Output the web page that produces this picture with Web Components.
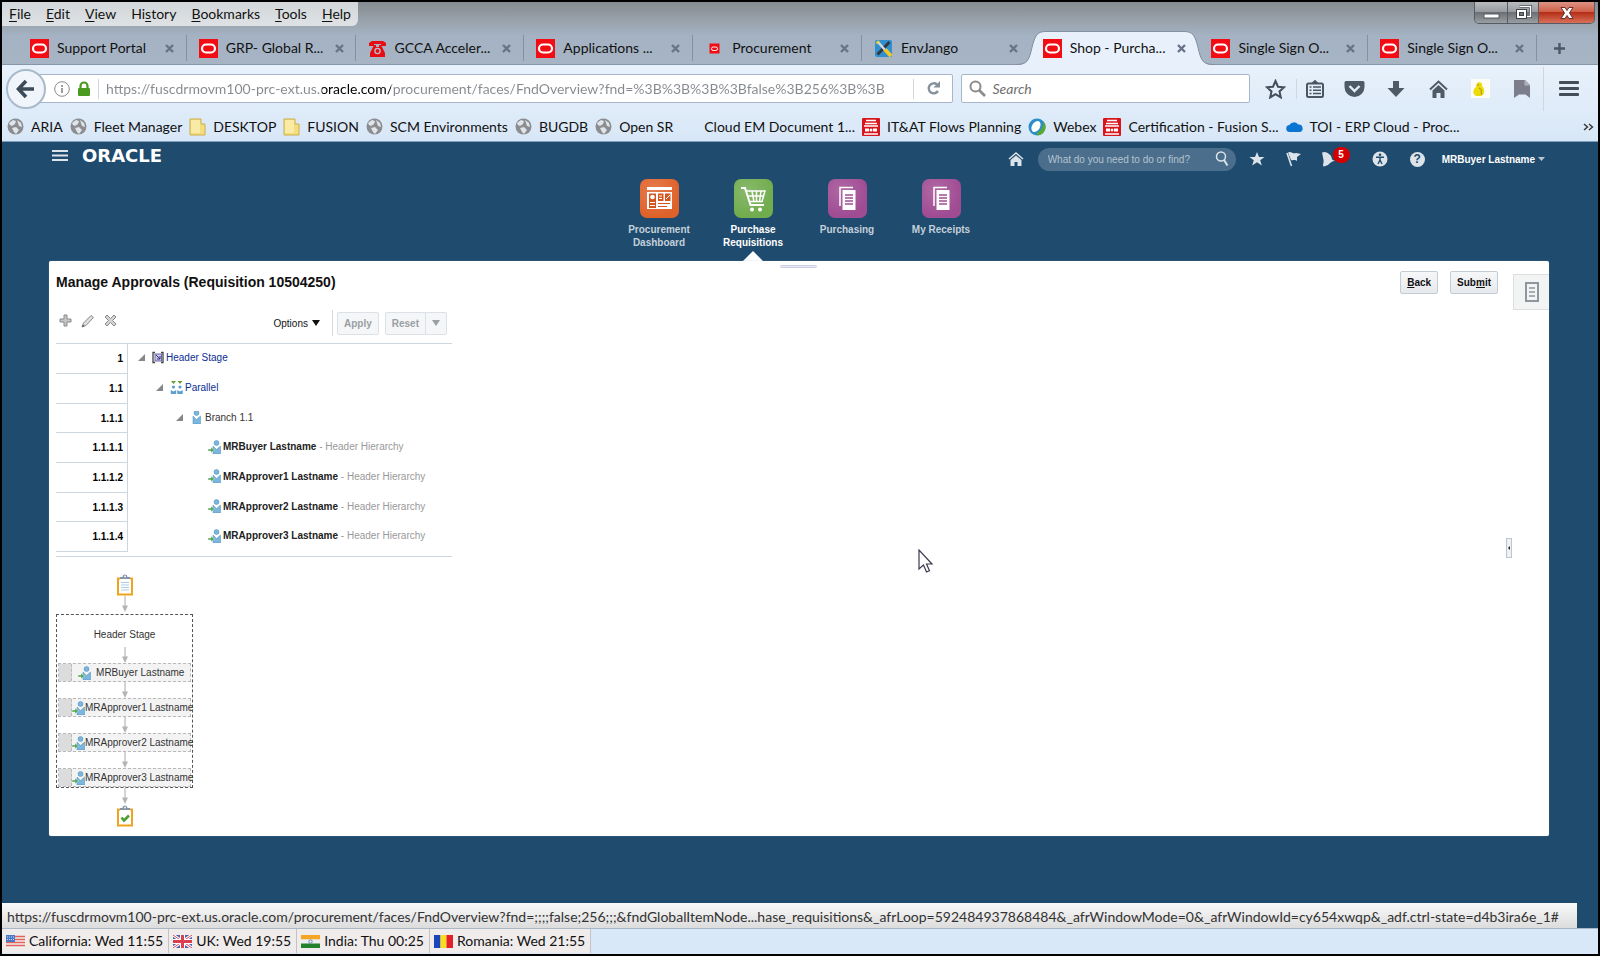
<!DOCTYPE html>
<html lang="en">
<head>
<meta charset="utf-8">
<title>Shop - Purchase Requisitions</title>
<style>
    html, body {
        margin: 0;
        height: 100%;
    }
    body {
        box-sizing: border-box;
        min-height: 100vh;
        border: 2px solid #000;
        background: #1f4b6e;
        display: flex;
        flex-direction: column;
        font: 14px/20px Lato, "Open Sans", sans-serif;
        color: #111;
    }
    approvals-app {
        flex: 1;
    }
</style>
</head>
<body>
<browser-head></browser-head>
<approvals-app></approvals-app>
<status-bar></status-bar>

<script>
const makeTemplate = (html) => {
    const template = document.createElement('template');
    template.innerHTML = html;
    return template;
};

const render = (host, template) => {
    host.attachShadow({ mode: 'open' }).appendChild(template.content.cloneNode(true));
};

const person = `<circle cx="8.500" cy="3" r="2.500" fill="#7ab6dd" stroke="#4d8ebd" stroke-width=".5"/>
    <path d="M5 6l3.500 3.500L12.500 6v8H5z" fill="#7ab6dd" stroke="#4d8ebd" stroke-width=".5"/>`;
const sheets = `<path d="M12 27V8.500h13" fill="none" stroke="#fff" stroke-width="1.500"/>
    <path d="M14.500 11h13v20h-13z" fill="#fff"/><path d="M17 16h8M17 19h8M17 22h8M17 25h8" stroke="#a04c93" stroke-width="1.300"/>`;
const board = `<path d="M2 4.500v16h14v-16" fill="#fff" stroke="#f0a31c" stroke-width="2"/><path d="M1 4.500h3M14 4.500h3" stroke="#f0a31c" stroke-width="2"/>
    <path d="M4 5V3h2.500a2.500 2.500 0 0 1 5 0H14v2z" fill="#8494a8"/><circle cx="9" cy="2.500" r=".9" fill="#fff"/>`;
const archive = `<rect width="18" height="18" rx="1" fill="#d8141c"/><path d="M4 2.500h10M3 5.500h12" stroke="#fff" stroke-width="1.500"/>
    <path d="M2 8h14M2 16h14" stroke="#fff" stroke-width="1.300"/><path d="M3 12h4M11 12h4" stroke="#fff" stroke-width="3"/><circle cx="9" cy="12" r="1.500" fill="#fff"/>`;

// name: [width, height, markup]
const icons = {
    oracle: [19, 19, '<path d="M0 0h19v19H0z" fill="#f20d14"/><rect x="3" y="5.500" width="13" height="8" rx="4" fill="none" stroke="#fff" stroke-width="2.200"/>'],
    oracleSmall: [19, 19, '<path d="M4.500 4.500h10v10h-10z" fill="#f20d14"/><rect x="6.500" y="8" width="6" height="3.500" rx="1.700" fill="none" stroke="#fff"/>'],
    phone: [19, 19, '<path d="M1 7V4l3-2h11l3 2v3h-5V5H6v2z" fill="#e80d12"/><path d="M6 6h2v2h3V6h2l4 8v4H2v-4z" fill="#e80d12"/><circle cx="9.500" cy="12" r="2.600" fill="none" stroke="#b7c0cc" stroke-width="1.300"/>'],
    tools: [19, 19, '<rect x="1" y="1" width="17" height="17" rx="2" fill="#2f8fd0"/><path d="M15.500 3L3.500 15.500" stroke="#33383d" stroke-width="3"/><path d="M4 3l7 8" stroke="#d5d8da" stroke-width="2.400"/><path d="M2.500 4.500L5 2" stroke="#f2cb37" stroke-width="2.400"/><path d="M11 10.500l6 6.500" stroke="#f4c722" stroke-width="4"/>'],
    close: [9, 9, '<path d="M1 1l7 7M8 1L1 8" stroke="#667486" stroke-width="2.400"/>'],
    plus: [13, 13, '<path d="M6.500 1v11M1 6.500h11" stroke="#4d5866" stroke-width="2.400"/>'],
    minimize: [17, 14, '<rect x="1" y="8" width="15" height="4" fill="#fff" stroke="#565a60"/>'],
    restore: [18, 16, '<path d="M5.500 1.500h11v10h-4" fill="none" stroke="#3f4348" stroke-width="3"/><path d="M5.500 1.500h11v10h-4" fill="none" stroke="#fff" stroke-width="1.500"/><rect x="2.500" y="4.500" width="10" height="9" fill="#fff" stroke="#3f4348"/><rect x="5.500" y="7.500" width="4" height="3" fill="#777" stroke="#3f4348"/>'],
    windowClose: [16, 14, '<path d="M2 1.500h4l2 3 2-3h4L10.500 7l3.500 5.500h-4L8 9.500l-2 3H2L5.500 7z" fill="#fff" stroke="#63332f"/>'],
    back: [20, 20, '<path d="M10 2L2.500 10 10 18M3 10h15" fill="none" stroke="#3d4a58" stroke-width="3.600"/>'],
    info: [16, 16, '<circle cx="8" cy="8" r="7.300" fill="none" stroke="#8a8a8a"/><path d="M8 7v5M8 4v2" stroke="#888" stroke-width="1.600"/>'],
    lock: [14, 16, '<path d="M3.500 8V5a3.500 3.500 0 0 1 7 0v3" fill="none" stroke="#4a9a1f" stroke-width="2.200"/><rect x="1" y="7" width="12" height="8" rx="1" fill="#4a9a1f"/>'],
    reload: [15, 15, '<path d="M12 10A5 5 0 1 1 11 3.500" fill="none" stroke="#84909c" stroke-width="2.400"/><path d="M14 0v6.500H7.500z" fill="#84909c"/>'],
    find: [17, 17, '<circle cx="6.500" cy="6.500" r="5" fill="none" stroke="#8b8b8b" stroke-width="2"/><path d="M10 10l6 6" stroke="#8b8b8b" stroke-width="2.600"/>'],
    star: [21, 20, '<path d="M10.500 2l2.500 5.700 6 .6-4.500 4.100 1.300 6-5.300-3.200-5.300 3.200 1.300-6L2 8.300l6-.6z" fill="none" stroke="#444f5b" stroke-width="2"/>'],
    list: [18, 19, '<rect x="1" y="4.500" width="16" height="13.500" rx="1.500" fill="none" stroke="#4b5663" stroke-width="2"/><path d="M5.500 4L9 .8 12.500 4z" fill="#4b5663"/><path d="M3.500 8h2M7 8h8M3.500 11.300h2M7 11.300h8M3.500 14.600h2M7 14.600h8" stroke="#4b5663" stroke-width="1.500"/>'],
    pocket: [21, 18, '<path d="M2 1h17a1.500 1.500 0 0 1 1.500 1.500V7a10 10 0 0 1-20 0V2.500A1.500 1.500 0 0 1 2 1z" fill="#4f5a67"/><path d="M5.500 6l5 5 5-5" fill="none" stroke="#e5effa" stroke-width="2.400"/>'],
    download: [18, 18, '<path d="M6 1h6v7h5.500L9 17 .5 8H6z" fill="#4f5a67"/>'],
    house: [19, 18, '<path d="M1 9.500l8.500-8 8.500 8" fill="none" stroke="#4f5a67" stroke-width="2"/><path d="M3.500 10.500l6-5.500 6 5.500V18h-4v-5h-4v5h-4z" fill="#4f5a67"/>'],
    duck: [19, 19, '<path d="M0 0h19v19H0z" fill="#fdfdf5"/><path d="M6 4c3-2 6 0 5 3 3 2 3 9-1 10H5c-4-2-3-7 0-9z" fill="#ecdc0b"/><path d="M8 9c4 1 1 5 3 7M6 6h2" stroke="#a38a13" fill="none"/>'],
    flagPage: [18, 20, '<path d="M1 1h11l5 5v13l-4.500-3.500H6L1 19z" fill="#7c7f8b"/><path d="M11.500 1v5.500H17" fill="#b0b3bd"/>'],
    menu: [20, 17, '<path d="M1 2.500h18M1 8.500h18M1 14.500h18" stroke="#434d58" stroke-width="2.800" stroke-linecap="round"/>'],
    globe: [17, 17, '<circle cx="8.500" cy="8.500" r="8" fill="#8b8d90"/><path d="M2 5l4-3 3 1-1 3-3 2-2-1zM10 2l4 3 1 4-3-1-1-3zM5 10l4-1 3 3-3 4-2-2z" fill="#dfe5ea"/>'],
    folder: [17, 18, '<path d="M1 1h11v5h4v11H1z" fill="#f3dd7c" stroke="#cdae4b"/><path d="M2 2h9v13H2z" fill="#f9eba5"/>'],
    blank: [17, 17, ''],
    archive: [18, 18, archive],
    webex: [18, 18, '<circle cx="9" cy="9" r="8.500" fill="#2b8ec9"/><path d="M10 17.500A8.500 8.500 0 0 0 15 3c1 5-1 9-7 13z" fill="#58a832"/><ellipse cx="8" cy="8.500" rx="4" ry="6" fill="#fff" transform="rotate(30 8 8.500)"/>'],
    cloud: [17, 12, '<path d="M4 11a3.500 3.500 0 0 1-.5-7A5 5 0 0 1 12 3.500 3.800 3.800 0 0 1 13.500 11z" fill="#0b75d1"/>'],
    more: [11, 8, '<path d="M1 1l3.500 3L1 7M6 1l3.500 3L6 7" fill="none" stroke="#333" stroke-width="1.400"/>'],

    burger: [16, 13, '<path d="M0 2h16M0 6.500h16M0 11h16" stroke="#dde4ea" stroke-width="2"/>'],
    appHome: [16, 16, '<path d="M1 8l7-6 7 6" fill="none" stroke="#dce3e9" stroke-width="1.500"/><path d="M2.500 9L8 4.500 13.500 9v6h-4v-4h-3v4h-4z" fill="#dce3e9"/>'],
    appFind: [14, 16, '<circle cx="6" cy="5.500" r="4.500" fill="none" stroke="#dce3e9" stroke-width="1.500"/><path d="M9 9l3.500 5.500" stroke="#dce3e9" stroke-width="2"/>'],
    appStar: [16, 16, '<path d="M8 1l2 5h5.500l-4.300 3.300 1.600 5.200L8 11.300l-4.800 3.200 1.600-5.200L.5 6H6z" fill="#dce3e9"/>'],
    appFlag: [16, 16, '<path d="M1 2l4.500 13" stroke="#dce3e9" stroke-width="1.600"/><path d="M2 1.500c3-2 5 2 8 .5l5 1-4 3v4C9 8 7 10 5 9z" fill="#dce3e9"/>'],
    bell: [16, 16, '<path d="M1 1.500l3-.5c4 1 7 4 7 7.500L14 10c-3 0-5 2-7 4l-4 1.500C1 15 3 12 2.500 9z" fill="#dce3e9"/>'],
    access: [16, 16, '<circle cx="8" cy="8" r="7.500" fill="#dce3e9"/><circle cx="8" cy="3.800" r="1.300" fill="#1f4b6e"/><path d="M4 6.300h8M8 6v4M8 9l-2 4M8 9l2 4" stroke="#1f4b6e" stroke-width="1.400"/>'],
    dash: [39, 39, '<path d="M7 8h25v3H7z" fill="#fff"/><path d="M7 13h25v17H7z" fill="#fff"/><path d="M9 14.500h7V29H9zM18 14.500h5.500V22H18zM25 14.500h5.500V22H25z" fill="#d5551f"/><circle cx="12.500" cy="18" r="2.300" fill="#fff"/><path d="M10 23.500h5M10 26.500h5M19 17h3M19 19.500h3M26 20l2-2 2-2" stroke="#fff"/><path d="M18 24.500h12M18 27.500h9" stroke="#d5551f"/>'],
    cart: [39, 39, '<path d="M7 9h4l5.500 17H30" fill="none" stroke="#fff" stroke-width="2"/><path d="M12 12h19l-3 10.500H15M13.500 17h16M18 12l2 11M22.500 12v11M27 12l-1.500 11" fill="none" stroke="#fff" stroke-width="1.500"/><circle cx="18" cy="30.500" r="2" fill="#fff"/><circle cx="26" cy="30.500" r="2" fill="#fff"/>'],
    sheets: [39, 39, sheets],
    notes: [14, 20, '<rect x="1" y="1" width="12" height="18" fill="#f2f3f3" stroke="#8f979e" stroke-width="2"/><path d="M4 6h6M4 10h6M4 14h6" stroke="#8f979e" stroke-width="1.500"/>'],
    add: [13, 13, '<path d="M5 1h3v4h4v3H8v4H5V8H1V5h4z" fill="#c5c5c5" stroke="#8a8a8a"/>'],
    pencil: [14, 14, '<path d="M1 13l1.500-4L10 1.500 12.500 3.500 5 11.500z" fill="#dedede" stroke="#8a8a8a"/><path d="M1 13l1-2.500 1.500 1.500z" fill="#555"/>'],
    remove: [13, 13, '<path d="M3 1l3.500 3.500L10 1l2 2-3.500 3.500L12 10l-2 2-3.500-3.500L3 12l-2-2 3.500-3.500L1 3z" fill="#d3d3d3" stroke="#8a8a8a"/>'],
    open: [7, 7, '<path d="M7 0v7H0z" fill="#84888b"/>'],
    caret: [8, 6, '<path d="M0 0h8L4 6z" fill="currentColor"/>'],
    smallCaret: [7, 5, '<path d="M0 0h7L3.500 4z" fill="currentColor"/>'],
    stage: [12, 13, '<path d="M3 1.500H1v10h2M9 1.500h2v10H9" fill="none" stroke="#444" stroke-width="1.300"/><rect x="3" y="3" width="6.500" height="7" fill="#c9c8ee" stroke="#6a68a8"/><path d="M4 4l4 4M8 5v3H5" stroke="#38366b" fill="none"/>'],
    parallel: [13, 13, '<path d="M1 0h5L3.500 3zM7.500 0h5L10 3z" fill="#63a032"/><circle cx="3.500" cy="6" r="1.600" fill="#5d9fce"/><circle cx="10" cy="6" r="1.600" fill="#5d9fce"/><path d="M.8 9l2.700 1.500L6.200 9v4H.8zM7.300 9l2.700 1.500L12.700 9v4H7.300z" fill="#5d9fce"/>'],
    branch: [9, 13, `<g transform="translate(-4 -1)">${person}</g>`],
    approver: [13, 14, `${person}<path d="M0 9h3V7l3.500 3L3 13v-2H0z" fill="#57a75c" stroke="#fff" stroke-width=".4"/>`],
    boardStart: [18, 22, `${board}<path d="M5 8.500h8M5 11h8M5 13.500h8M5 16h8" stroke="#a9cbe8" stroke-width="1.200"/>`],
    boardEnd: [18, 22, `${board}<path d="M5.500 12.500l2.500 3 5-5" fill="none" stroke="#4f9f35" stroke-width="2.600"/>`],
    arrowDown: [8, 16, '<path d="M4 0v10" stroke="#d4d4d4" stroke-width="2"/><path d="M1 9.500h6L4 16z" fill="#b4b4b4"/>'],
    pointer: [16, 25, '<path d="M1 1v19l4.500-4 3 7 3-1.300L8.500 15H14z" fill="#fff" stroke="#3a3a50" stroke-width="1.200"/>'],

    us: [19, 13, '<path d="M0 0h19v13H0z" fill="#f3eeee"/><path d="M0 1.500h19M0 4.500h19M0 7.500h19M0 10.500h19" stroke="#e0645c" stroke-width="1.500"/><path d="M0 0h9v7H0z" fill="#4a78c4"/><path d="M1 2h7M1 4.500h7" stroke="#c9d8f2" stroke-dasharray="1 1"/>'],
    uk: [19, 13, '<path d="M0 0h19v13H0z" fill="#5262a8"/><path d="M0 0l19 13M19 0L0 13" stroke="#fff" stroke-width="3"/><path d="M0 0l19 13M19 0L0 13" stroke="#d9475a"/><path d="M9.500 0v13M0 6.500h19" stroke="#fff" stroke-width="5"/><path d="M9.500 0v13M0 6.500h19" stroke="#dc4050" stroke-width="3"/>'],
    india: [19, 13, '<path d="M0 0h19v4.500H0z" fill="#f5a526"/><path d="M0 4.500h19v4H0z" fill="#eee"/><path d="M0 8.500h19V13H0z" fill="#23812c"/><circle cx="9.500" cy="6.500" r="1.700" fill="none" stroke="#6a86ba"/>'],
    romania: [19, 13, '<path d="M0 0h6.500v13H0z" fill="#1c45bd"/><path d="M6.500 0h6v13h-6z" fill="#f9dd1a"/><path d="M12.500 0H19v13h-6.500z" fill="#e3202a"/>']
};

class UiIcon extends HTMLElement {
    constructor() {
        super();
        const [width, height, markup] = icons[this.getAttribute('name')];
        render(this, makeTemplate(`
        <style>
        :host { display: inline-flex; flex: none; }
        svg { display: block; }
        </style>
        <svg width="${width}" height="${height}" viewBox="0 0 ${width} ${height}" aria-hidden="true">${markup}</svg>`));
    }
}

class BrowserTab extends HTMLElement {
    constructor() {
        super();
        render(this, makeTemplate(`
        <style>
        :host {
            flex: 1;
            min-width: 0;
            height: 34px;
            position: relative;
            display: flex;
            align-items: center;
            gap: 8px;
            padding: 0 9px 0 12px;
            box-sizing: border-box;
        }
        .label {
            flex: 1;
            white-space: nowrap;
        }
        button {
            display: flex;
            padding: 4px;
            border: 0;
            background: none;
        }
        .line {
            position: absolute;
            right: 0;
            width: 1px;
            height: 26px;
            background: #83909f;
        }
        :host([before]) .line, .shape { display: none; }
        :host([active]) .line { display: none; }
        :host([active]) .shape {
            display: flex;
            position: absolute;
            inset: 0 -15px;
        }
        .fill {
            flex: 1;
            background: #e8f1fb;
            border-top: 1px solid #8191a2;
        }
        .front { position: relative; }
        ui-icon { position: relative; }
        </style>
        <div class="shape">
            <svg width="30" height="34" viewBox="0 0 30 34"><path d="M0 34c12 0 13-5 16-17S21 .5 30 .5V34z" fill="#e8f1fb"/><path d="M0 33.500c12 0 13-5 16-17S21 .5 30 .5" fill="none" stroke="#8191a2"/></svg>
            <div class="fill"></div>
            <svg width="30" height="34" viewBox="0 0 30 34"><path d="M30 34c-12 0-13-5-16-17S9 .5 0 .5V34z" fill="#e8f1fb"/><path d="M30 33.500c-12 0-13-5-16-17S9 .5 0 .5" fill="none" stroke="#8191a2"/></svg>
        </div>
        <ui-icon name="${this.getAttribute('icon')}"></ui-icon>
        <span class="label front"><slot></slot></span>
        <button class="front" aria-label="Close tab"><ui-icon name="close"></ui-icon></button>
        <span class="line"></span>`));
    }
}

class BookmarkItem extends HTMLElement {
    constructor() {
        super();
        render(this, makeTemplate(`
        <style>
        :host { display: block; white-space: nowrap; }
        a {
            display: flex;
            align-items: center;
            gap: 7px;
            color: inherit;
            text-decoration: none;
        }
        </style>
        <a href="#"><ui-icon name="${this.getAttribute('icon')}"></ui-icon><span><slot></slot></span></a>`));
    }
}

const headTemplate = makeTemplate(`
    <style>
    :host { display: block; }
    button {
        display: flex;
        align-items: center;
        justify-content: center;
        padding: 0;
        border: 0;
        background: none;
        font: inherit;
        color: inherit;
    }
    u { text-underline-offset: 2px; }
    .frame {
        background: linear-gradient(#858b90, #9aa4ae 20px, #a4b2c3 34px, #a6b4c4);
        border-bottom: 1px solid #8796a7;
    }
    .title-row {
        display: flex;
        justify-content: space-between;
        align-items: flex-start;
        height: 29px;
    }
    .menus {
        display: flex;
        gap: 15px;
        height: 24px;
        padding: 0 7px;
        border-radius: 0 0 6px 0;
        background: linear-gradient(#d3d6d9, #dfe2e4);
    }
    .window {
        display: flex;
        margin-right: 3px;
        height: 22px;
        border: 1px solid #555c64;
        border-top: 0;
        border-radius: 0 0 5px 5px;
        box-sizing: border-box;
        overflow: hidden;
    }
    .window button {
        width: 33px;
        background: linear-gradient(#b9bcbf, #9a9da1 45%, #6c7075 50%, #9a9fa4);
        border-right: 1px solid #555c64;
    }
    .window .restore { width: 31px; }
    .window .exit {
        width: 55px;
        border-right: 0;
        background: linear-gradient(#dd9384, #d1624c 45%, #b52e16 50%, #d9705a);
    }
    .tabs {
        display: flex;
        align-items: center;
        margin-bottom: -1px;
        padding: 0 16px;
    }
    .new-tab { width: 45px; height: 30px; }
    .bars { background: linear-gradient(#e8f1fb, #d8e7f7); border-bottom: 1px solid #7ea0bd; }
    .nav {
        display: flex;
        align-items: center;
        height: 47px;
        padding: 0 4px;
    }
    .back {
        width: 40px;
        height: 40px;
        flex: none;
        box-sizing: border-box;
        border: 2px solid #a9bacb;
        border-radius: 50%;
        background: #eff5fb;
        position: relative;
    }
    .url, .search {
        display: flex;
        align-items: center;
        height: 29px;
        box-sizing: border-box;
        border: 1px solid #a6b7ca;
        background: #fff;
    }
    .url {
        flex: 929;
        margin-left: -20px;
        padding-left: 27px;
        gap: 7px;
        border-radius: 0 2px 2px 0;
    }
    .search {
        flex: 289;
        margin-left: 8px;
        padding-left: 7px;
        gap: 6px;
        border-radius: 2px;
    }
    input {
        flex: 1;
        min-width: 0;
        padding: 0;
        border: 0;
        outline: 0;
        background: none;
        font: inherit;
        color: #7b7f84;
    }
    .url input {
        background: linear-gradient(90deg, #85898e 216px, #000 216px, #000 285px, #85898e 285px);
        -webkit-background-clip: text;
        background-clip: text;
        -webkit-text-fill-color: transparent;
    }
    .search input::placeholder { font-style: italic; color: #6f6f6f; opacity: 1; }
    .rule { width: 1px; height: 20px; background: #cfd6de; flex: none; }
    .reload { width: 38px; margin-left: -7px; }
    .actions { display: flex; align-items: center; }
    .actions button { width: 42px; }
    .actions .star { margin-left: 4px; }
    .actions .list { width: 36px; }
    .actions .rule { height: 44px; }
    .actions .short { height: 20px; }
    .actions .menu { width: 50px; }
    .marks {
        display: flex;
        align-items: center;
        gap: 7px;
        height: 29px;
        padding: 0 4px 0 5px;
    }
    .more { margin-left: auto; }
    </style>
    <div class="frame">
        <div class="title-row">
            <div class="menus">
                <button><span><u>F</u>ile</span></button>
                <button><span><u>E</u>dit</span></button>
                <button><span><u>V</u>iew</span></button>
                <button><span>Hi<u>s</u>tory</span></button>
                <button><span><u>B</u>ookmarks</span></button>
                <button><span><u>T</u>ools</span></button>
                <button><span><u>H</u>elp</span></button>
            </div>
            <div class="window">
                <button aria-label="Minimize"><ui-icon name="minimize"></ui-icon></button>
                <button class="restore" aria-label="Restore"><ui-icon name="restore"></ui-icon></button>
                <button class="exit" aria-label="Close"><ui-icon name="windowClose"></ui-icon></button>
            </div>
        </div>
        <div class="tabs">
            <browser-tab icon="oracle">Support Portal</browser-tab>
            <browser-tab icon="oracle">GRP- Global R...</browser-tab>
            <browser-tab icon="phone">GCCA Acceler...</browser-tab>
            <browser-tab icon="oracle">Applications ...</browser-tab>
            <browser-tab icon="oracleSmall">Procurement</browser-tab>
            <browser-tab icon="tools" before>EnvJango</browser-tab>
            <browser-tab icon="oracle" active>Shop - Purcha...</browser-tab>
            <browser-tab icon="oracle">Single Sign O...</browser-tab>
            <browser-tab icon="oracle">Single Sign O...</browser-tab>
            <button class="new-tab" aria-label="New tab"><ui-icon name="plus"></ui-icon></button>
        </div>
    </div>
    <div class="bars">
        <div class="nav">
            <button class="back" aria-label="Back"><ui-icon name="back"></ui-icon></button>
            <div class="url">
                <ui-icon name="info"></ui-icon>
                <ui-icon name="lock"></ui-icon>
                <span class="rule"></span>
                <input aria-label="Address" value="https://fuscdrmovm100-prc-ext.us.oracle.com/procurement/faces/FndOverview?fnd=%3B%3B%3B%3Bfalse%3B256%3B%3B">
                <span class="rule"></span>
                <button class="reload" aria-label="Reload"><ui-icon name="reload"></ui-icon></button>
            </div>
            <div class="search">
                <ui-icon name="find"></ui-icon>
                <input aria-label="Search" placeholder="Search">
            </div>
            <div class="actions">
                <button class="star" aria-label="Bookmark this page"><ui-icon name="star"></ui-icon></button>
                <span class="rule short"></span>
                <button class="list" aria-label="Show bookmarks"><ui-icon name="list"></ui-icon></button>
                <button aria-label="Save to Pocket"><ui-icon name="pocket"></ui-icon></button>
                <button aria-label="Downloads"><ui-icon name="download"></ui-icon></button>
                <button aria-label="Home"><ui-icon name="house"></ui-icon></button>
                <button aria-label="World clock"><ui-icon name="duck"></ui-icon></button>
                <button aria-label="Page flag"><ui-icon name="flagPage"></ui-icon></button>
                <span class="rule"></span>
                <button class="menu" aria-label="Open menu"><ui-icon name="menu"></ui-icon></button>
            </div>
        </div>
        <div class="marks">
            <bookmark-item icon="globe">ARIA</bookmark-item>
            <bookmark-item icon="globe">Fleet Manager</bookmark-item>
            <bookmark-item icon="folder">DESKTOP</bookmark-item>
            <bookmark-item icon="folder">FUSION</bookmark-item>
            <bookmark-item icon="globe">SCM Environments</bookmark-item>
            <bookmark-item icon="globe">BUGDB</bookmark-item>
            <bookmark-item icon="globe">Open SR</bookmark-item>
            <bookmark-item icon="blank">Cloud EM Document 1...</bookmark-item>
            <bookmark-item icon="archive">IT&amp;AT Flows Planning</bookmark-item>
            <bookmark-item icon="webex">Webex</bookmark-item>
            <bookmark-item icon="archive">Certification - Fusion S...</bookmark-item>
            <bookmark-item icon="cloud">TOI - ERP Cloud - Proc...</bookmark-item>
            <button class="more" aria-label="More bookmarks"><ui-icon name="more"></ui-icon></button>
        </div>
    </div>`);

class BrowserHead extends HTMLElement {
    constructor() {
        super();
        render(this, headTemplate);
    }
}

class NavTile extends HTMLElement {
    constructor() {
        super();
        render(this, makeTemplate(`
        <style>
        :host { display: block; width: 94px; position: relative; }
        a {
            display: flex;
            flex-direction: column;
            align-items: center;
            gap: 5px;
            text-align: center;
            text-decoration: none;
            font-weight: bold;
            color: #c3d0da;
        }
        :host([active]) a { color: #fff; }
        .tile {
            border-radius: 7px;
            background: radial-gradient(circle at 35% 30%, rgba(255, 255, 255, .16), transparent 70%) ${this.getAttribute('color')};
        }
        .label { width: 74px; }
        .notch { display: none; }
        :host([active]) .notch {
            display: block;
            position: absolute;
            bottom: 0;
            left: 37px;
            border: 10px solid transparent;
            border-top: 0;
            border-bottom-color: #fff;
        }
        </style>
        <a href="#">
            <ui-icon class="tile" name="${this.getAttribute('icon')}"></ui-icon>
            <span class="label"><slot></slot></span>
        </a>
        <span class="notch"></span>`));
    }
}

class AppHeader extends HTMLElement {
    constructor() {
        super();
        render(this, makeTemplate(`
        <style>
        :host {
            display: flex;
            align-items: center;
            height: 34px;
            padding: 0 53px 0 50px;
            color: #e4eaef;
        }
        button {
            display: flex;
            align-items: center;
            justify-content: center;
            gap: 3px;
            padding: 0;
            border: 0;
            background: none;
            font: inherit;
            color: inherit;
        }
        .left {
            display: flex;
            align-items: center;
            gap: 14px;
            flex: 1;
            padding-bottom: 7px;
        }
        .logo {
            font: 18px/20px "DejaVu Sans", sans-serif;
            font-weight: bold;
            color: #fff;
        }
        .search {
            display: flex;
            align-items: center;
            width: 198px;
            height: 23px;
            box-sizing: border-box;
            margin: 0 3px 0 14px;
            padding: 0 7px 0 10px;
            border-radius: 12px;
            background: #4a6e8b;
        }
        input {
            flex: 1;
            min-width: 0;
            padding: 0;
            border: 0;
            background: none;
            font: inherit;
        }
        input::placeholder { color: #b5c3cf; opacity: 1; }
        .tools { display: flex; }
        .tools button { width: 37px; }
        .tools .bell { width: 41px; position: relative; padding-right: 8px; box-sizing: border-box; }
        .tools .access { width: 45px; padding-left: 8px; box-sizing: border-box; }
        .badge {
            position: absolute;
            left: 20px;
            top: -4px;
            width: 17px;
            height: 16px;
            border-radius: 8px;
            background: #d40000;
            color: #fff;
            font-weight: bold;
            line-height: 16px;
        }
        .help span {
            width: 15px;
            height: 15px;
            border-radius: 50%;
            background: #dce3e9;
            color: #1f4b6e;
            font-size: 12px;
            font-weight: bold;
            line-height: 15px;
        }
        .user { font-weight: bold; color: #fff; margin-left: 6px; }
        .user ui-icon { color: #b7c5d1; }
        </style>
        <div class="left">
            <button aria-label="Navigator"><ui-icon name="burger"></ui-icon></button>
            <span class="logo">ORACLE</span>
        </div>
        <button aria-label="Home"><ui-icon name="appHome"></ui-icon></button>
        <div class="search">
            <input aria-label="Find" placeholder="What do you need to do or find?">
            <button aria-label="Go"><ui-icon name="appFind"></ui-icon></button>
        </div>
        <div class="tools">
            <button class="star" aria-label="Favorites"><ui-icon name="appStar"></ui-icon></button>
            <button aria-label="Watchlist"><ui-icon name="appFlag"></ui-icon></button>
            <button class="bell" aria-label="Notifications"><ui-icon name="bell"></ui-icon><span class="badge">5</span></button>
            <button class="access" aria-label="Accessibility"><ui-icon name="access"></ui-icon></button>
            <button class="help"><span>?</span></button>
        </div>
        <button class="user">MRBuyer Lastname <ui-icon name="smallCaret"></ui-icon></button>`));
    }
}

const stages = [
    { id: '1', depth: 0, icon: 'stage', name: 'Header Stage', link: true },
    { id: '1.1', depth: 1, icon: 'parallel', name: 'Parallel', link: true },
    { id: '1.1.1', depth: 2, icon: 'branch', name: 'Branch 1.1' },
    { id: '1.1.1.1', depth: 3, icon: 'approver', name: 'MRBuyer Lastname', rule: 'Header Hierarchy' },
    { id: '1.1.1.2', depth: 3, icon: 'approver', name: 'MRApprover1 Lastname', rule: 'Header Hierarchy' },
    { id: '1.1.1.3', depth: 3, icon: 'approver', name: 'MRApprover2 Lastname', rule: 'Header Hierarchy' },
    { id: '1.1.1.4', depth: 3, icon: 'approver', name: 'MRApprover3 Lastname', rule: 'Header Hierarchy' }
];

const stageName = (stage) => {
    if (stage.link) return `<a href="#">${stage.name}</a>`;
    if (stage.rule) return `<span><b>${stage.name}</b> <span class="rule">- ${stage.rule}</span></span>`;
    return `<span>${stage.name}</span>`;
};

class ApprovalTree extends HTMLElement {
    constructor() {
        super();
        const rows = stages.map((stage) => `
            <tr>
                <th scope="row">${stage.id}</th>
                <td><div class="cell depth-${stage.depth}">
                    ${stage.rule ? '' : '<ui-icon class="open" name="open"></ui-icon>'}
                    <ui-icon name="${stage.icon}"></ui-icon>${stageName(stage)}
                </div></td>
            </tr>`).join('');
        render(this, makeTemplate(`
        <style>
        :host {
            display: block;
            width: 396px;
            padding-bottom: 4px;
            border-top: 1px solid #ccd6dd;
            border-bottom: 1px solid #ccd6dd;
            color: #333;
        }
        table {
            width: 100%;
            height: 208px;
            border-collapse: collapse;
        }
        th, td { padding: 0; }
        th {
            width: 67px;
            padding-right: 4px;
            text-align: right;
            color: #000;
            border-right: 1px solid #ccd6dd;
            border-bottom: 1px solid #ccd6dd;
        }
        .cell {
            display: flex;
            align-items: center;
            gap: 2px;
            height: 14px;
            white-space: nowrap;
            padding-bottom: 2px;
        }
        .open { margin-right: 5px; }
        .depth-0 { padding-left: 10px; }
        .depth-1 { padding-left: 28px; }
        .depth-2 { padding-left: 48px; gap: 4px; }
        .depth-3 { padding-left: 80px; }
        a { color: #0b2e91; text-decoration: none; }
        b { color: #222; }
        .rule { color: #999; }
        </style>
        <table>${rows}</table>`));
    }
}

class FlowNode extends HTMLElement {
    constructor() {
        super();
        render(this, makeTemplate(`
        <style>
        :host {
            display: flex;
            height: 19px;
            box-sizing: border-box;
            border: 1px dashed #b9b9b9;
            background: #f3f3f3;
            white-space: nowrap;
        }
        .grip {
            width: 12px;
            flex: none;
            background: #dcdcdc;
            border-right: 1px dashed #b9b9b9;
        }
        .name {
            flex: 1;
            min-width: 0;
            display: flex;
            align-items: center;
            justify-content: space-evenly;
        }
        </style>
        <span class="grip"></span>
        <span class="name"><ui-icon name="approver"></ui-icon><slot></slot></span>`));
    }
}

class ApprovalFlow extends HTMLElement {
    constructor() {
        super();
        render(this, makeTemplate(`
        <style>
        :host {
            display: flex;
            flex-direction: column;
            align-items: center;
            width: 137px;
            margin-top: 17px;
            color: #333;
        }
        .stage {
            align-self: stretch;
            display: flex;
            flex-direction: column;
            margin: 2px 0 0;
            padding: 0 1px;
            border: 1px dashed #555;
        }
        .stage ui-icon { align-self: center; }
        .title {
            padding: 13px 0 6px;
            line-height: 13px;
            text-align: center;
        }
        .end { margin-top: 1px; }
        </style>
        <ui-icon name="boardStart"></ui-icon>
        <ui-icon name="arrowDown"></ui-icon>
        <div class="stage">
            <span class="title">Header Stage</span>
            ${stages.filter((stage) => stage.rule).map((stage) => `
            <ui-icon name="arrowDown"></ui-icon>
            <flow-node>${stage.name}</flow-node>`).join('')}
        </div>
        <ui-icon name="arrowDown"></ui-icon>
        <ui-icon class="end" name="boardEnd"></ui-icon>`));
    }
}

class AppButton extends HTMLElement {
    constructor() {
        super();
        render(this, makeTemplate(`
        <style>
        :host { display: block; }
        button {
            display: block;
            height: 23px;
            padding: 0 6px;
            border: 1px solid #c3ccd4;
            border-radius: 2px;
            background: linear-gradient(#f6f7f8, #e6e9ed);
            font: inherit;
            font-weight: bold;
            color: #111;
        }
        button:disabled {
            border-color: #dbe1e6;
            background: #f4f6f7;
            color: #9a9fa3;
        }
        </style>
        <button ${this.hasAttribute('disabled') ? 'disabled' : ''}><slot></slot></button>`));
    }
}

const appTemplate = makeTemplate(`
    <style>
    :host {
        display: block;
        position: relative;
        font: 10px/13px "Liberation Sans", Arial, sans-serif;
    }
    nav {
        display: flex;
        justify-content: center;
        height: 82px;
        padding-top: 3px;
    }
    nav-tile { height: 82px; }
    .panel {
        position: relative;
        margin: 0 49px 0 47px;
        padding: 10px 0 9px 7px;
        border-radius: 2px;
        background: #fff;
        box-shadow: 0 0 1px #86a1b6;
    }
    .grip {
        position: absolute;
        top: 4px;
        left: calc(50% - 19px);
        width: 35px;
        height: 1px;
        border: 1px solid #ccd0e2;
        border-radius: 2px;
        background: #e8eaf6;
    }
    .heading { display: flex; align-items: flex-start; height: 39px; }
    h1 {
        flex: 1;
        margin: 0;
        font-size: 14px;
        line-height: 22px;
        color: #111;
    }
    .heading app-button { margin-right: 12px; }
    .notes {
        width: 36px;
        height: 36px;
        margin: 3px 0 0 3px;
        border: 1px solid #dbdfe2;
        border-right: 0;
        background: #f2f3f3;
        display: flex;
        align-items: center;
        justify-content: center;
    }
    .toolbar {
        display: flex;
        align-items: center;
        width: 391px;
        height: 26px;
        padding-bottom: 7px;
    }
    .toolbar button {
        display: flex;
        align-items: center;
        gap: 4px;
        padding: 0;
        border: 0;
        background: none;
        font: inherit;
        color: #111;
    }
    .edit { display: flex; gap: 9px; flex: 1; padding: 0 0 5px 3px; }
    .line {
        width: 1px;
        height: 26px;
        margin: 0 4px 0 12px;
        background: #d3dbe1;
    }
    .reset { display: flex; margin-left: 6px; }
    .reset .drop {
        height: 23px;
        margin-left: -1px;
        padding: 0 6px;
        border: 1px solid #dbe1e6;
        border-radius: 0 2px 2px 0;
        background: #f4f6f7;
        color: #9a9fa3;
    }
    .splitter {
        position: absolute;
        right: 37px;
        top: 277px;
        width: 6px;
        height: 20px;
        padding: 0;
        border: 1px solid #b9c6d1;
        background: #eef2f5;
        box-sizing: border-box;
    }
    .splitter::after {
        content: "";
        position: absolute;
        left: 1px;
        top: 7px;
        border: 2px solid transparent;
        border-left: 0;
        border-right-color: #222;
    }
    .pointer {
        position: absolute;
        left: 57%;
        margin-left: 6px;
        top: 407px;
    }
    </style>
    <app-header></app-header>
    <nav>
        <nav-tile icon="dash" color="#e0622b">Procurement Dashboard</nav-tile>
        <nav-tile icon="cart" color="#71ac4e" active>Purchase Requisitions</nav-tile>
        <nav-tile icon="sheets" color="#a04c93">Purchasing</nav-tile>
        <nav-tile icon="sheets" color="#a04c93">My Receipts</nav-tile>
    </nav>
    <main class="panel">
        <span class="grip"></span>
        <div class="heading">
            <h1>Manage Approvals (Requisition 10504250)</h1>
            <app-button><u>B</u>ack</app-button>
            <app-button>Sub<u>m</u>it</app-button>
            <button class="notes" aria-label="Notes"><ui-icon name="notes"></ui-icon></button>
        </div>
        <div class="toolbar">
            <div class="edit">
                <button aria-label="Add"><ui-icon name="add"></ui-icon></button>
                <button aria-label="Edit"><ui-icon name="pencil"></ui-icon></button>
                <button aria-label="Remove"><ui-icon name="remove"></ui-icon></button>
            </div>
            <button>Options <ui-icon name="caret"></ui-icon></button>
            <span class="line"></span>
            <app-button disabled>Apply</app-button>
            <div class="reset">
                <app-button disabled>Reset</app-button>
                <button class="drop" aria-label="More reset options" disabled><ui-icon name="caret"></ui-icon></button>
            </div>
        </div>
        <approval-tree></approval-tree>
        <approval-flow></approval-flow>
        <button class="splitter" aria-label="Expand pane"></button>
    </main>
    <ui-icon class="pointer" name="pointer"></ui-icon>`);

class ApprovalsApp extends HTMLElement {
    constructor() {
        super();
        render(this, appTemplate);
    }
}

class WorldClock extends HTMLElement {
    constructor() {
        super();
        render(this, makeTemplate(`
        <style>
        :host {
            display: flex;
            align-items: center;
            gap: 4px;
            height: 24px;
            padding: 0 5px 0 4px;
            border-right: 1px solid #c3c3c3;
            background: #f0ecec;
            white-space: nowrap;
        }
        </style>
        <ui-icon name="${this.getAttribute('flag')}"></ui-icon><span><slot></slot></span>`));
    }
}

class StatusBar extends HTMLElement {
    constructor() {
        super();
        render(this, makeTemplate(`
        <style>
        :host { display: block; }
        .link {
            display: block;
            width: fit-content;
            height: 25px;
            padding: 0 18px 0 5px;
            background: linear-gradient(#fafafa, #dcdcdc);
            line-height: 27px;
            white-space: nowrap;
            color: #333;
        }
        .clocks {
            display: flex;
            height: 25px;
            border-top: 1px solid #a9b7c4;
            background: #d9e8f8;
        }
        </style>
        <span class="link">https://fuscdrmovm100-prc-ext.us.oracle.com/procurement/faces/FndOverview?fnd=;;;;false;256;;;&amp;fndGlobalItemNode...hase_requisitions&amp;_afrLoop=592484937868484&amp;_afrWindowMode=0&amp;_afrWindowId=cy654xwqp&amp;_adf.ctrl-state=d4b3ira6e_1#</span>
        <div class="clocks">
            <world-clock flag="us">California: Wed 11:55</world-clock>
            <world-clock flag="uk">UK: Wed 19:55</world-clock>
            <world-clock flag="india">India: Thu 00:25</world-clock>
            <world-clock flag="romania">Romania: Wed 21:55</world-clock>
        </div>`));
    }
}

customElements.define('ui-icon', UiIcon);
customElements.define('browser-tab', BrowserTab);
customElements.define('bookmark-item', BookmarkItem);
customElements.define('browser-head', BrowserHead);
customElements.define('nav-tile', NavTile);
customElements.define('app-header', AppHeader);
customElements.define('app-button', AppButton);
customElements.define('approval-tree', ApprovalTree);
customElements.define('flow-node', FlowNode);
customElements.define('approval-flow', ApprovalFlow);
customElements.define('approvals-app', ApprovalsApp);
customElements.define('world-clock', WorldClock);
customElements.define('status-bar', StatusBar);
</script>
</body>
</html>
